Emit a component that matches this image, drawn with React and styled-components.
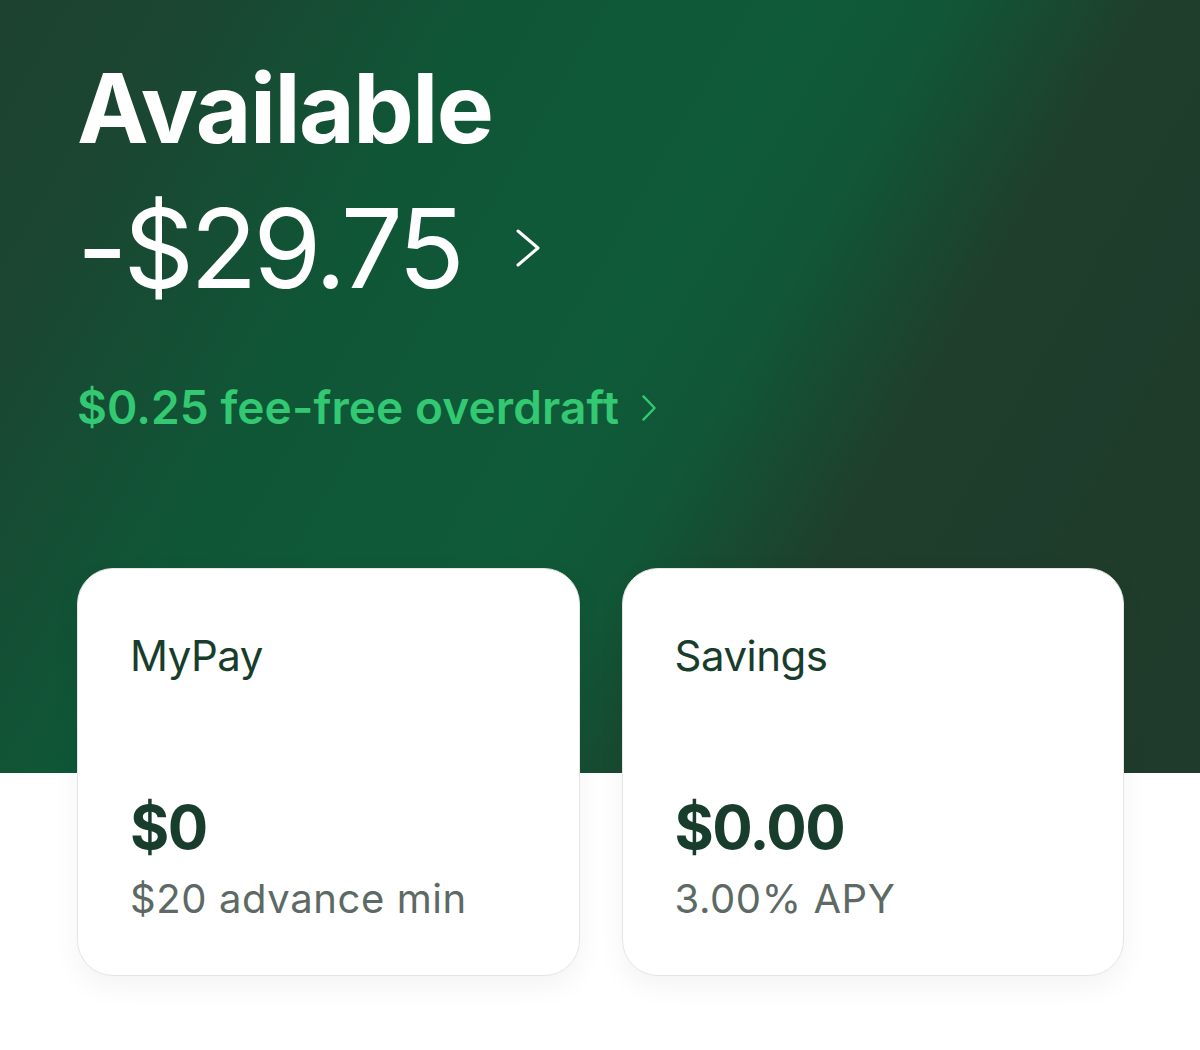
import React from 'react';
import styled, { createGlobalStyle } from 'styled-components';

const GlobalStyle = createGlobalStyle`
  body {
    margin: 0;
    background: #ffffff;
    font-family: 'Inter', 'Liberation Sans', sans-serif;
  }
`;

const Page = styled.div`
  min-height: 1050px;
  padding: 60px 76px 0 77px;
  box-sizing: border-box;
  background-color: #ffffff;
  background-image: linear-gradient(
    120deg,
    #1d4230 0%,
    #1b4631 12%,
    #0f5637 30%,
    #0f5a39 50%,
    #115636 58%,
    #1f3e2c 70%,
    #1f3b2b 100%
  );
  background-size: 100% 773px;
  background-repeat: no-repeat;
`;

const Title = styled.h1`
  margin: 0;
  font-size: 96px;
  line-height: 1;
  font-weight: 700;
  letter-spacing: -1.5px;
  color: #ffffff;
`;

const BalanceRow = styled.div`
  display: flex;
  align-items: center;
  gap: 54px;
  margin-top: 37px;
`;

const Balance = styled.span`
  font-size: 110px;
  line-height: 1;
  font-weight: 400;
  letter-spacing: -4px;
  color: #ffffff;
`;

const OverdraftLink = styled.a`
  display: flex;
  align-items: center;
  gap: 22px;
  margin-top: 77px;
  font-size: 46px;
  line-height: 1.2;
  font-weight: 600;
  letter-spacing: 0.1px;
  color: #33c872;
  text-decoration: none;
`;

const Cards = styled.div`
  display: grid;
  grid-template-columns: 1fr 1fr;
  gap: 42px;
  margin-top: 133px;
`;

const Card = styled.div`
  height: 408px;
  box-sizing: border-box;
  padding: 62px 52px 52px;
  display: flex;
  flex-direction: column;
  justify-content: space-between;
  background: #ffffff;
  border: 1px solid #e4e6e5;
  border-radius: 36px;
  box-shadow: 0 10px 28px rgba(0, 0, 0, 0.05);
`;

const CardLabel = styled.div`
  font-size: 42px;
  line-height: 1.2;
  color: #183d2c;
  letter-spacing: -0.5px;
`;

const CardValue = styled.div`
  font-size: 60px;
  line-height: 1.1;
  font-weight: 700;
  letter-spacing: -1.5px;
  color: #183d2c;
`;

const CardNote = styled.div`
  margin-top: 15px;
  font-size: 40px;
  line-height: 1.2;
  letter-spacing: 0.6px;
  color: #5d6964;
`;

function Chevron({ width, height, color, stroke }) {
  return (
    <svg width={width} height={height} viewBox={`0 0 ${width} ${height}`} fill="none">
      <polyline
        points={`${stroke},${stroke} ${width - stroke},${height / 2} ${stroke},${height - stroke}`}
        stroke={color}
        strokeWidth={stroke}
        strokeLinecap="round"
        strokeLinejoin="round"
      />
    </svg>
  );
}

function AccountCard({ label, value, note }) {
  return (
    <Card>
      <CardLabel>{label}</CardLabel>
      <div>
        <CardValue>{value}</CardValue>
        <CardNote>{note}</CardNote>
      </div>
    </Card>
  );
}

export default function App() {
  return (
    <>
      <GlobalStyle />
      <Page>
        <Title>Available</Title>
        <BalanceRow>
          <Balance>-$29.75</Balance>
          <Chevron width={26} height={40} color="#ffffff" stroke={3} />
        </BalanceRow>
        <OverdraftLink href="#">
          $0.25 fee-free overdraft
          <Chevron width={16} height={28} color="#33c872" stroke={2.4} />
        </OverdraftLink>
        <Cards>
          <AccountCard label="MyPay" value="$0" note="$20 advance min" />
          <AccountCard label="Savings" value="$0.00" note="3.00% APY" />
        </Cards>
      </Page>
    </>
  );
}
